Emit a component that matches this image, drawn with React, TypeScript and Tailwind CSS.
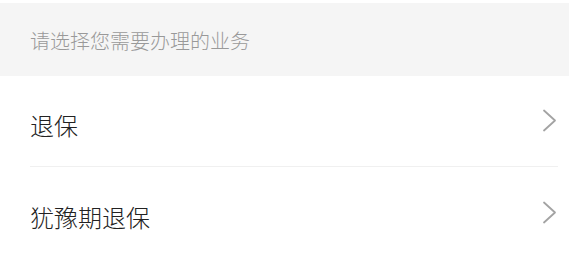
const items = ['退保', '犹豫期退保'];

function Chevron() {
  return (
    <svg width="15" height="23" viewBox="0 0 15 23" fill="none" className="shrink-0">
      <polyline
        points="2,1.5 13,11.5 2,21.5"
        stroke="#a3a3a3"
        strokeWidth="1.8"
        strokeLinecap="round"
        strokeLinejoin="round"
      />
    </svg>
  );
}

export default function App() {
  return (
    <div
      className="w-[569px] h-[258px] overflow-hidden bg-white pt-[3px]"
      style={{ fontFamily: '"Noto Sans CJK SC", "Noto Sans", sans-serif' }}
    >
      <div className="h-[73px] bg-[#f5f5f5] flex items-center px-[30px] pt-[2px]">
        <span className="text-[20px] leading-none font-light text-[#999]">请选择您需要办理的业务</span>
      </div>
      <ul className="pl-[30px] pr-[11px]">
        {items.map((item, i) => (
          <li
            key={item}
            className={`h-[91px] flex items-center justify-between ${i === 0 ? 'border-b border-[#f0f0f0]' : ''}`}
          >
            <span className="text-[24px] leading-none font-light text-[#222] pt-[8px]">{item}</span>
            <span className="pr-[1px] pb-[1px]">
              <Chevron />
            </span>
          </li>
        ))}
      </ul>
    </div>
  );
}
